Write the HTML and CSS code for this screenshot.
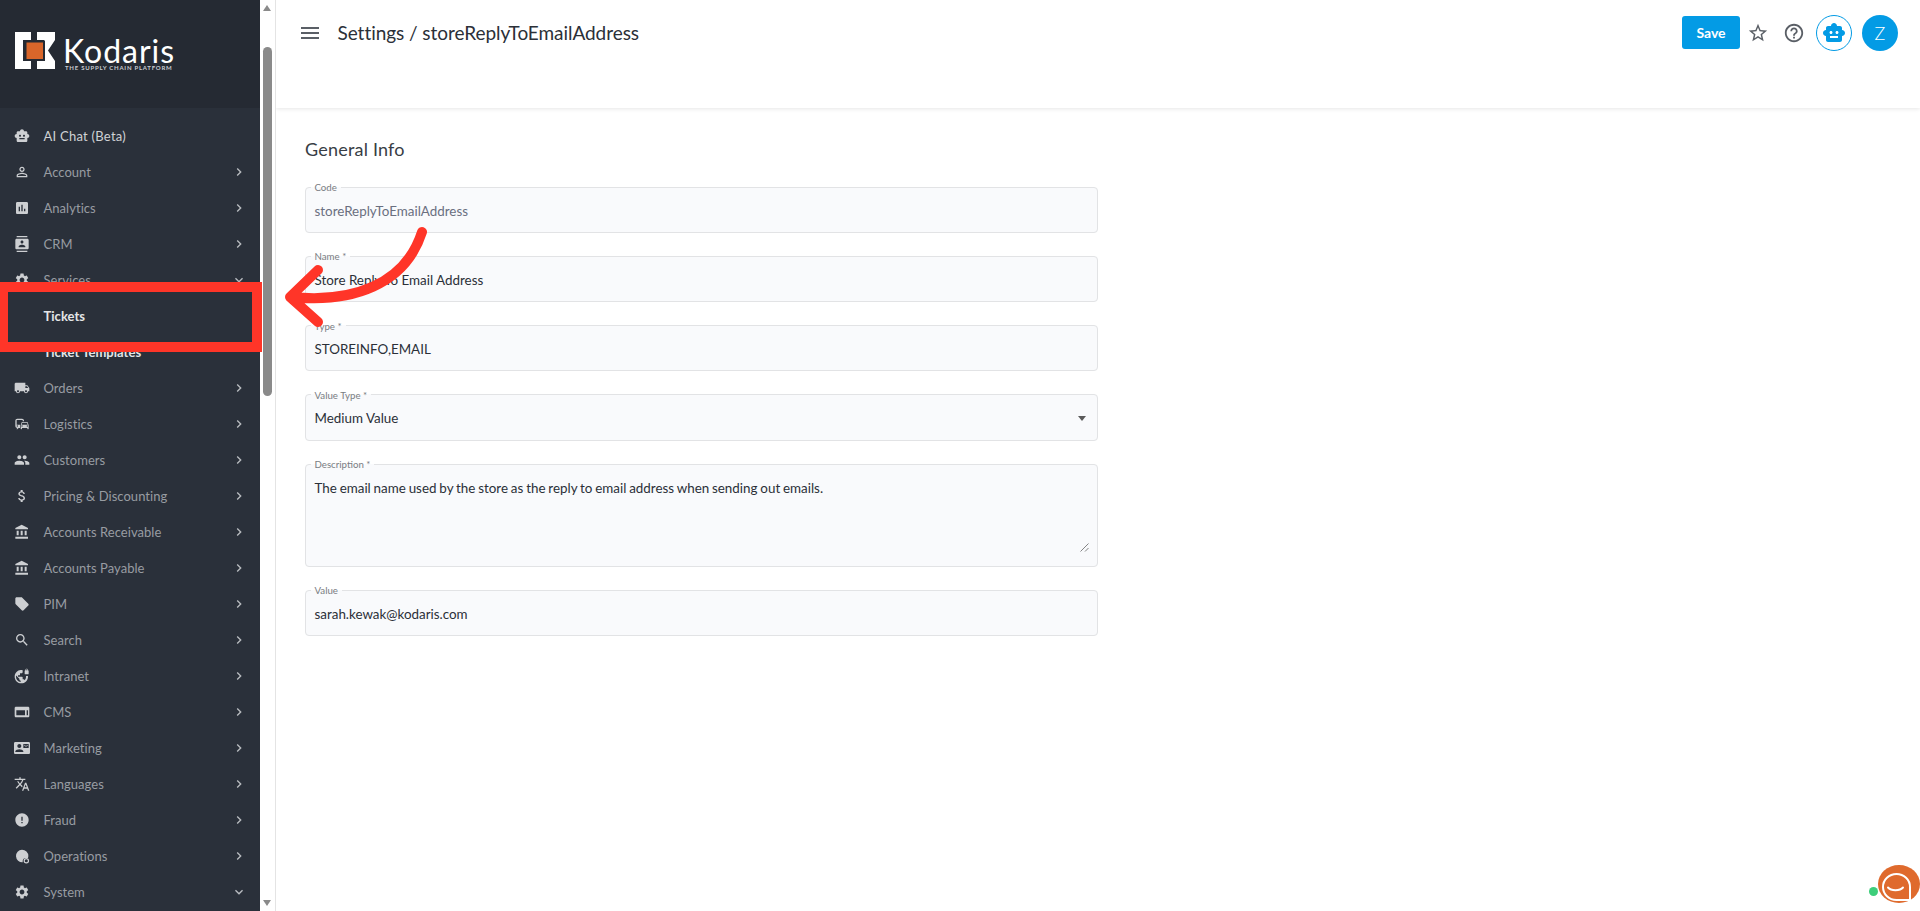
FILE: index.html
```html
<!DOCTYPE html>
<html lang="en">
<head>
<meta charset="utf-8">
<title>Settings / storeReplyToEmailAddress</title>
<link rel="stylesheet" href="styles.css">
</head>
<body>
<svg class="defs" width="0" height="0" aria-hidden="true">
  <symbol id="i-right" viewBox="0 0 24 24"><path d="M10 6L8.59 7.41 13.17 12l-4.58 4.59L10 18l6-6z"/></symbol>
  <symbol id="i-down" viewBox="0 0 24 24"><path d="M16.59 8.59L12 13.17 7.41 8.59 6 10l6 6 6-6z"/></symbol>
  <symbol id="i-robot" viewBox="0 0 24 24"><path d="M20 9V7c0-1.1-.9-2-2-2h-3c0-1.66-1.34-3-3-3S9 3.34 9 5H6c-1.1 0-2 .9-2 2v2c-1.66 0-3 1.34-3 3s1.34 3 3 3v4c0 1.1.9 2 2 2h12c1.1 0 2-.9 2-2v-4c1.66 0 3-1.34 3-3s-1.34-3-3-3zM7.5 11.5c0-.83.67-1.5 1.5-1.5s1.5.67 1.5 1.5S9.83 13 9 13s-1.5-.67-1.5-1.5zM16 17H8v-2h8v2zm-1-4c-.83 0-1.5-.67-1.5-1.5S14.17 10 15 10s1.5.67 1.5 1.5S15.83 13 15 13z"/></symbol>
  <symbol id="i-gear" viewBox="0 0 24 24"><path d="M19.14 12.94c.04-.3.06-.61.06-.94 0-.32-.02-.64-.07-.94l2.03-1.58c.18-.14.23-.41.12-.61l-1.92-3.32c-.12-.22-.37-.29-.59-.22l-2.39.96c-.5-.38-1.03-.7-1.62-.94l-.36-2.54c-.04-.24-.24-.41-.48-.41h-3.84c-.24 0-.43.17-.47.41l-.36 2.54c-.59.24-1.13.57-1.62.94l-2.39-.96c-.22-.08-.47 0-.59.22L2.74 8.87c-.12.21-.08.47.12.61l2.03 1.58c-.05.3-.09.63-.09.94s.02.64.07.94l-2.03 1.58c-.18.14-.23.41-.12.61l1.92 3.32c.12.22.37.29.59.22l2.39-.96c.5.38 1.03.7 1.62.94l.36 2.54c.05.24.24.41.48.41h3.84c.24 0 .44-.17.47-.41l.36-2.54c.59-.24 1.13-.56 1.62-.94l2.39.96c.22.08.47 0 .59-.22l1.92-3.32c.12-.22.07-.47-.12-.61l-2.01-1.58zM12 15.6c-1.98 0-3.6-1.62-3.6-3.6s1.62-3.6 3.6-3.6 3.6 1.62 3.6 3.6-1.62 3.6-3.6 3.6z"/></symbol>
  <symbol id="i-bank" viewBox="0 0 24 24"><path d="M4 10v7h3v-7H4zm6 0v7h3v-7h-3zM2 22h19v-3H2v3zm14-12v7h3v-7h-3zm-4.5-9L2 6v2h19V6l-9.5-5z"/></symbol>
</svg>

<div class="app">
  <aside class="sidebar">
    <div class="brand">
      <svg class="logo-mark" viewBox="0 0 40 37" aria-hidden="true">
        <path class="logo-white" d="M0 0H16V8H8V29H16V37H0z"/>
        <path class="logo-white" d="M22 0H40V8L33 18.5L40 29V37H22V29H29V8H22z"/>
        <rect class="logo-orange" x="10.5" y="9.5" width="18.5" height="18.5"/>
      </svg>
      <div class="logo-text">
        <div class="logo-name">Kodaris</div>
        <div class="logo-tag">THE SUPPLY CHAIN PLATFORM</div>
      </div>
    </div>
    <nav class="menu">
      <a class="item bright"><svg class="ico" viewBox="0 0 24 24"><use href="#i-robot"/></svg><span class="label">AI Chat (Beta)</span></a>
      <a class="item"><svg class="ico" viewBox="0 0 24 24"><path d="M12 5.9c1.16 0 2.1.94 2.1 2.1s-.94 2.1-2.1 2.1S9.9 9.16 9.9 8s.94-2.1 2.1-2.1m0 9c2.97 0 6.1 1.46 6.1 2.1v1.1H5.9V17c0-.64 3.13-2.1 6.1-2.1M12 4C9.79 4 8 5.79 8 8s1.79 4 4 4 4-1.79 4-4-1.79-4-4-4zm0 9c-2.67 0-8 1.34-8 4v3h16v-3c0-2.66-5.33-4-8-4z"/></svg><span class="label">Account</span><svg class="chev"><use href="#i-right"/></svg></a>
      <a class="item"><svg class="ico" viewBox="0 0 24 24"><path d="M19 3H5c-1.1 0-2 .9-2 2v14c0 1.1.9 2 2 2h14c1.1 0 2-.9 2-2V5c0-1.1-.9-2-2-2zM9 17H7v-7h2v7zm4 0h-2V7h2v10zm4 0h-2v-4h2v4z"/></svg><span class="label">Analytics</span><svg class="chev"><use href="#i-right"/></svg></a>
      <a class="item"><svg class="ico" viewBox="0 0 24 24"><path d="M20 0H4v2h16V0zM4 24h16v-2H4v2zM20 4H4c-1.1 0-2 .9-2 2v12c0 1.1.9 2 2 2h16c1.1 0 2-.9 2-2V6c0-1.1-.9-2-2-2zm-8 2.75c1.24 0 2.25 1.01 2.25 2.25s-1.01 2.25-2.25 2.25S9.75 10.24 9.75 9 10.76 6.75 12 6.75zM17 17H7v-1.5c0-1.67 3.33-2.5 5-2.5s5 .83 5 2.5V17z"/></svg><span class="label">CRM</span><svg class="chev"><use href="#i-right"/></svg></a>
      <a class="item"><svg class="ico" viewBox="0 0 24 24"><use href="#i-gear"/></svg><span class="label">Services</span><svg class="chev"><use href="#i-down"/></svg></a>
      <a class="item sub"><span class="label">Tickets</span></a>
      <a class="item sub"><span class="label">Ticket Templates</span></a>
      <a class="item"><svg class="ico" viewBox="0 0 24 24"><path d="M20 8h-3V4H3c-1.1 0-2 .9-2 2v11h2c0 1.66 1.34 3 3 3s3-1.34 3-3h6c0 1.66 1.34 3 3 3s3-1.34 3-3h2v-5l-3-4zM6 18.5c-.83 0-1.5-.67-1.5-1.5s.67-1.5 1.5-1.5 1.5.67 1.5 1.5-.67 1.5-1.5 1.5zm13.5-9l1.96 2.5H17V9.5h2.5zm-1.5 9c-.83 0-1.5-.67-1.5-1.5s.67-1.5 1.5-1.5 1.5.67 1.5 1.5-.67 1.5-1.5 1.5z"/></svg><span class="label">Orders</span><svg class="chev"><use href="#i-right"/></svg></a>
      <a class="item"><svg class="ico" viewBox="0 0 24 24"><path d="M12 4H5C3.34 4 2 5.34 2 7v8c0 1.66 1.34 3 3 3l-1 1v1h1l2-2.03L9 18v-5H4V5.98L13 6v2h2V7c0-1.66-1.34-3-3-3zM5 14c.55 0 1 .45 1 1s-.45 1-1 1-1-.45-1-1 .45-1 1-1zm15.57-4.34c-.14-.4-.52-.66-.97-.66h-7.19c-.46 0-.83.26-.98.66L10 13.77l.01 5.51c0 .38.31.72.69.72h.62c.38 0 .68-.38.68-.76V18h8v1.24c0 .38.31.76.69.76h.61c.38 0 .69-.34.69-.72l.01-1.37v-4.14l-1.43-4.07zm-8.16.34h7.19l1.03 3h-9.25l1.03-3zM12 16c-.55 0-1-.45-1-1s.45-1 1-1 1 .45 1 1-.45 1-1 1zm8 0c-.55 0-1-.45-1-1s.45-1 1-1 1 .45 1 1-.45 1-1 1z"/></svg><span class="label">Logistics</span><svg class="chev"><use href="#i-right"/></svg></a>
      <a class="item"><svg class="ico" viewBox="0 0 24 24"><path d="M16 11c1.66 0 2.99-1.34 2.99-3S17.66 5 16 5c-1.66 0-3 1.34-3 3s1.34 3 3 3zm-8 0c1.66 0 2.99-1.34 2.99-3S9.66 5 8 5C6.34 5 5 6.34 5 8s1.34 3 3 3zm0 2c-2.33 0-7 1.17-7 3.5V19h14v-2.5c0-2.33-4.67-3.5-7-3.5zm8 0c-.29 0-.62.02-.97.05 1.16.84 1.97 1.97 1.97 3.45V19h6v-2.5c0-2.33-4.67-3.5-7-3.5z"/></svg><span class="label">Customers</span><svg class="chev"><use href="#i-right"/></svg></a>
      <a class="item"><svg class="ico" viewBox="0 0 24 24"><path d="M11.8 10.9c-2.27-.59-3-1.2-3-2.15 0-1.09 1.01-1.85 2.7-1.85 1.78 0 2.44.85 2.5 2.1h2.21c-.07-1.72-1.12-3.3-3.21-3.81V3h-3v2.16c-1.94.42-3.5 1.68-3.5 3.61 0 2.31 1.91 3.46 4.7 4.13 2.5.6 3 1.48 3 2.41 0 .69-.49 1.79-2.7 1.79-2.06 0-2.87-.92-2.98-2.1h-2.2c.12 2.19 1.76 3.42 3.68 3.83V21h3v-2.15c1.95-.37 3.5-1.5 3.5-3.55 0-2.84-2.43-3.81-4.7-4.4z"/></svg><span class="label">Pricing &amp; Discounting</span><svg class="chev"><use href="#i-right"/></svg></a>
      <a class="item"><svg class="ico" viewBox="0 0 24 24"><use href="#i-bank"/></svg><span class="label">Accounts Receivable</span><svg class="chev"><use href="#i-right"/></svg></a>
      <a class="item"><svg class="ico" viewBox="0 0 24 24"><use href="#i-bank"/></svg><span class="label">Accounts Payable</span><svg class="chev"><use href="#i-right"/></svg></a>
      <a class="item"><svg class="ico" viewBox="0 0 24 24"><path d="M21.41 11.58l-9-9C12.05 2.22 11.55 2 11 2H4c-1.1 0-2 .9-2 2v7c0 .55.22 1.05.59 1.42l9 9c.36.36.86.58 1.41.58.55 0 1.05-.22 1.41-.59l7-7c.37-.36.59-.86.59-1.41 0-.55-.23-1.06-.59-1.42z"/></svg><span class="label">PIM</span><svg class="chev"><use href="#i-right"/></svg></a>
      <a class="item"><svg class="ico" viewBox="0 0 24 24"><path d="M15.5 14h-.79l-.28-.27C15.41 12.59 16 11.11 16 9.5 16 5.91 13.09 3 9.5 3S3 5.91 3 9.5 5.91 16 9.5 16c1.61 0 3.09-.59 4.23-1.57l.27.28v.79l5 4.99L20.49 19l-4.99-5zm-6 0C7.01 14 5 11.99 5 9.5S7.01 5 9.5 5 14 7.01 14 9.5 11.99 14 9.5 14z"/></svg><span class="label">Search</span><svg class="chev"><use href="#i-right"/></svg></a>
      <a class="item"><svg class="ico" viewBox="0 0 24 24"><path d="M21 3.5V3c0-1.1-.9-2-2-2s-2 .9-2 2v.5c-.55 0-1 .45-1 1v4c0 .55.45 1 1 1h4c.55 0 1-.45 1-1v-4c0-.55-.45-1-1-1zm-.8 0h-2.4V3c0-.66.54-1.2 1.2-1.2s1.2.54 1.2 1.2v.5zm-2.28 8.5c.04.33.08.66.08 1 0 2.08-.8 3.97-2.1 5.39-.26-.81-1-1.39-1.9-1.39h-1v-3c0-.55-.45-1-1-1H6v-2h2c.55 0 1-.45 1-1V8h2c1.1 0 2-.9 2-2V3.46c-.95-.3-1.95-.46-3-.46C5.48 3 1 7.48 1 13s4.48 10 10 10 10-4.48 10-10c0-.34-.02-.67-.05-1h-2.03zM10 20.93c-3.95-.49-7-3.85-7-7.93 0-.62.08-1.21.21-1.79L8 16v1c0 1.1.9 2 2 2v1.93z"/></svg><span class="label">Intranet</span><svg class="chev"><use href="#i-right"/></svg></a>
      <a class="item"><svg class="ico" viewBox="0 0 24 24"><path fill-rule="evenodd" d="M21 4H3c-1.1 0-2 .9-2 2v12c0 1.1.9 2 2 2h18c1.1 0 2-.9 2-2V6c0-1.1-.9-2-2-2zM3.5 9.5h13V17h-13zm15.5 0h2V17h-2z"/></svg><span class="label">CMS</span><svg class="chev"><use href="#i-right"/></svg></a>
      <a class="item"><svg class="ico" viewBox="0 0 24 24"><path d="M21 8V7l-3 2-3-2v1l3 2 3-2zm1-5H2C.9 3 0 3.9 0 5v14c0 1.1.9 2 2 2h20c1.1 0 1.99-.9 1.99-2L24 5c0-1.1-.9-2-2-2zM8 6c1.66 0 3 1.34 3 3s-1.34 3-3 3-3-1.34-3-3 1.34-3 3-3zm6 12H2v-1c0-2 4-3.1 6-3.1s6 1.1 6 3.1v1zm8-6h-8V6h8v6z"/></svg><span class="label">Marketing</span><svg class="chev"><use href="#i-right"/></svg></a>
      <a class="item"><svg class="ico" viewBox="0 0 24 24"><path d="M12.87 15.07l-2.54-2.51.03-.03c1.74-1.94 2.98-4.17 3.71-6.53H17V4h-7V2H8v2H1v1.99h11.17C11.5 7.92 10.44 9.75 9 11.35 8.07 10.32 7.3 9.19 6.69 8h-2c.73 1.63 1.73 3.17 2.98 4.56l-5.09 5.02L4 19l5-5 3.11 3.11.76-2.04zM18.5 10h-2L12 22h2l1.12-3h4.75L21 22h2l-4.5-12zm-2.62 7l1.62-4.33L19.12 17h-3.24z"/></svg><span class="label">Languages</span><svg class="chev"><use href="#i-right"/></svg></a>
      <a class="item"><svg class="ico" viewBox="0 0 24 24"><path d="M12 2C6.48 2 2 6.48 2 12s4.48 10 10 10 10-4.48 10-10S17.52 2 12 2zm1 15h-2v-2h2v2zm0-4h-2V7h2v6z"/></svg><span class="label">Fraud</span><svg class="chev"><use href="#i-right"/></svg></a>
      <a class="item"><svg class="ico" viewBox="0 0 24 24"><path d="M12 2.5A9.5 9.5 0 1 0 13 21.5V19l1-2.5 2.5-1.5H21c.3-1 .5-2 .5-3A9.5 9.5 0 0 0 12 2.5z"/><circle cx="18.5" cy="19" r="3.2" fill="none" stroke="currentColor" stroke-width="1.8"/></svg><span class="label">Operations</span><svg class="chev"><use href="#i-right"/></svg></a>
      <a class="item"><svg class="ico" viewBox="0 0 24 24"><use href="#i-gear"/></svg><span class="label">System</span><svg class="chev"><use href="#i-down"/></svg></a>
    </nav>
  </aside>

  <div class="scrollbar">
    <span class="arrow-up"></span>
    <span class="thumb"></span>
    <span class="arrow-down"></span>
  </div>

  <main class="main">
    <header class="topbar">
      <svg class="menu-btn" viewBox="0 0 24 24"><path d="M3 18h18v-2H3v2zm0-5h18v-2H3v2zm0-7v2h18V6H3z"/></svg>
      <h1 class="title">Settings / storeReplyToEmailAddress</h1>
      <div class="actions">
        <button class="save" type="button">Save</button>
        <svg class="action-ico" viewBox="0 0 24 24"><path d="M22 9.24l-7.19-.62L12 2 9.19 8.63 2 9.24l5.46 4.73L5.82 21 12 17.27 18.18 21l-1.63-7.03L22 9.24zM12 15.4l-3.76 2.27 1-4.28-3.32-2.88 4.38-.38L12 6.1l1.71 4.04 4.38.38-3.32 2.88 1 4.28L12 15.4z"/></svg>
        <svg class="action-ico" viewBox="0 0 24 24"><path d="M11 18h2v-2h-2v2zm1-16C6.48 2 2 6.48 2 12s4.48 10 10 10 10-4.48 10-10S17.52 2 12 2zm0 18c-4.41 0-8-3.59-8-8s3.59-8 8-8 8 3.59 8 8-3.59 8-8 8zm0-14c-2.21 0-4 1.79-4 4h2c0-1.1.9-2 2-2s2 .9 2 2c0 2-3 1.75-3 5h2c0-2.25 3-2.5 3-5 0-2.21-1.79-4-4-4z"/></svg>
        <span class="bot"><svg viewBox="0 0 24 24"><use href="#i-robot"/></svg></span>
        <span class="avatar">Z</span>
      </div>
    </header>

    <section class="content">
      <h2 class="section-title">General Info</h2>
      <form class="form">
        <fieldset class="field"><legend>Code</legend><div class="value muted">storeReplyToEmailAddress</div></fieldset>
        <fieldset class="field"><legend>Name *</legend><div class="value">Store Reply To Email Address</div></fieldset>
        <fieldset class="field"><legend>Type *</legend><div class="value">STOREINFO,EMAIL</div></fieldset>
        <fieldset class="field"><legend>Value Type *</legend><div class="value select">Medium Value<span class="caret"></span></div></fieldset>
        <fieldset class="field area"><legend>Description *</legend>
          <div class="area-body">
            <div class="value desc">The email name used by the store as the reply to email address when sending out emails.</div>
            <svg class="grip" viewBox="0 0 9 9"><path d="M8.5.5L.5 8.5M8.5 5L5 8.5"/></svg>
          </div>
        </fieldset>
        <fieldset class="field"><legend>Value</legend><div class="value">sarah.kewak@kodaris.com</div></fieldset>
      </form>
    </section>
  </main>
</div>

<div class="highlight"></div>
<svg class="callout" viewBox="0 0 1920 911" aria-hidden="true">
  <path d="M422 232C405 285 352 303 292 297M318 270L290 297L318 322"/>
</svg>
<div class="chat-widget">
  <svg viewBox="0 0 42 38"><ellipse class="bubble" cx="21" cy="19" rx="21" ry="19"/><path class="bubble-line" d="M18.5 9a13.5 13 0 0 1 13.5 13v13H18.5a13.5 13 0 0 1 0-26z"/><path class="bubble-line" d="M10 22.5c3 3.5 12 3.5 15 0"/></svg>
  <span class="online"></span>
</div>
</body>
</html>
```
FILE: styles.css
```css
* { box-sizing: border-box; }
html, body { margin: 0; height: 100%; overflow: hidden; background: #fff; }
body { font-family: "Lato", "Noto Sans", sans-serif; color: #252a33; }
.defs { position: absolute; }

.app { display: flex; height: 911px; }

/* sidebar */
.sidebar { width: 260px; flex: none; background: #2a303a; overflow: hidden; }
.brand { height: 108px; background: #252a33; display: flex; align-items: flex-start; padding: 32px 0 0 15px; gap: 8px; }
.logo-mark { width: 40px; height: 37px; flex: none; }
.logo-white { fill: #fff; }
.logo-orange { fill: #d9662a; stroke: #252a33; stroke-width: 2; }
.logo-text { color: #fff; padding-top: 4px; }
.logo-name { font: 400 32px/29px "Lato", sans-serif; letter-spacing: 1px; }
.logo-tag { font: 700 6px/6px "Lato", sans-serif; letter-spacing: .76px; color: #c8cbd0; white-space: nowrap; margin-left: 2px; }

.menu { padding-top: 10px; }
.item { display: flex; align-items: center; height: 36px; padding: 0 16px 0 14px; color: #989ca2; font-size: 13px; }
.item.bright { color: #d0d2d5; }
.item.sub { color: #e4e5e7; font-weight: 700; padding-left: 43.5px; }
.ico { width: 16px; height: 16px; margin: 0 13.5px 0 0; fill: #cdcfd2; color: #cdcfd2; flex: none; }
.label { flex: 1; white-space: nowrap; padding-bottom: 1px; letter-spacing: .04px; }
.bright .label { letter-spacing: .25px; }
.chev { width: 16px; height: 16px; fill: #b9bcc1; flex: none; margin-right: -3px; }

/* scrollbar */
.scrollbar { width: 16px; flex: none; border-right: 1px solid #e4e4e4; background: #fff; position: relative; }
.thumb { position: absolute; top: 47px; left: 3px; width: 9px; height: 349px; border-radius: 5px; background: #8a8a8a; }
.arrow-up, .arrow-down { position: absolute; left: 3px; width: 0; height: 0; border-left: 4.5px solid transparent; border-right: 4.5px solid transparent; }
.arrow-up { top: 5px; border-bottom: 6px solid #8a8a8a; }
.arrow-down { bottom: 5px; border-top: 6px solid #8a8a8a; }

/* main */
.main { flex: 1; min-width: 0; }
.topbar { height: 108px; background: #fff; box-shadow: 0 1px 4px rgba(0,0,0,.1); display: flex; align-items: flex-start; padding: 16px 22px 0 22px; }
.menu-btn { width: 24px; height: 24px; margin-top: 5px; fill: #5a5f66; flex: none; }
.title { margin: 0 0 0 15.5px; font-size: 19px; font-weight: 400; line-height: 33px; color: #2b3038; letter-spacing: -.05px; }
.actions { margin-left: auto; display: flex; align-items: center; height: 36px; margin-top: -1px; }
.save { width: 58px; height: 33px; border: 0; border-radius: 3px; background: #039be5; color: #fff; font: 700 14px "Lato", sans-serif; margin: -2px 7px 0 0; padding: 0; }
.action-ico { width: 22px; height: 22px; fill: #5a5f66; margin-right: 14px; flex: none; }
.bot { width: 36px; height: 36px; border: 1px solid #039be5; border-radius: 50%; display: flex; align-items: center; justify-content: center; margin-right: 10px; margin-left: -3px; }
.bot svg { width: 24px; height: 24px; fill: #039be5; }
.avatar { width: 36px; height: 36px; border-radius: 50%; background: #039be5; color: #fff; font-size: 18px; font-weight: 300; display: flex; align-items: center; justify-content: center; }

.content { padding: 30px 0 0 29px; }
.section-title { margin: 0; font-size: 18px; font-weight: 400; line-height: 22px; color: #383d45; letter-spacing: .2px; }
.form { width: 793px; margin-top: 22px; display: flex; flex-direction: column; gap: 18.5px; }
.field { margin: 0; padding: 0 8.5px; min-width: 0; height: 50.8px; border: 1.5px solid #e2e3e5; border-radius: 4px; background: #f9fafc; }
.field.area { height: 107.5px; }
.field legend { padding: 0 4px; margin-left: -4px; font-size: 9.7px; line-height: 10px; color: #7a7d82; }
.area-body { position: relative; height: 96px; }
.value { font-size: 13.4px; line-height: 18px; padding-top: 9.5px; color: #2b3038; white-space: nowrap; }
.value.muted { color: #6a6f80; }
.value.desc { word-spacing: -.6px; }
.select { display: flex; align-items: center; justify-content: space-between; }
.caret { width: 0; height: 0; border-left: 4.5px solid transparent; border-right: 4.5px solid transparent; border-top: 5px solid #5a5a5a; margin-right: 3px; }
.grip { position: absolute; right: 0; bottom: 13px; width: 9px; height: 9px; fill: none; stroke: #666; stroke-width: .8; }

/* overlays */
.highlight { position: absolute; left: -2px; top: 282px; width: 264px; height: 70px; border: 10px solid #ff3528; }
.callout { position: absolute; left: 0; top: 0; width: 1920px; height: 911px; pointer-events: none; fill: none; stroke: #ff3528; stroke-width: 10; stroke-linecap: round; stroke-linejoin: round; }
.chat-widget { position: absolute; left: 1878px; top: 865px; width: 42px; height: 38px; }
.chat-widget svg { width: 42px; height: 38px; display: block; }
.bubble { fill: #df6a2d; }
.bubble-line { fill: none; stroke: #fff; stroke-width: 2; stroke-linecap: round; }
.online { position: absolute; left: -9px; top: 22px; width: 9px; height: 9px; border-radius: 50%; background: #3dce7b; }
```
